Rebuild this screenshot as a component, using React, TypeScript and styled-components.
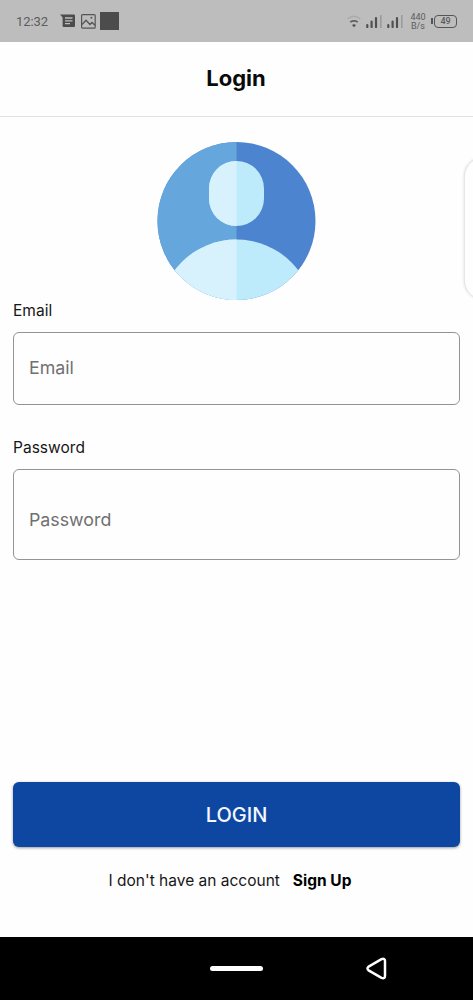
import React from "react";
import styled, { createGlobalStyle } from "styled-components";

const GlobalStyle = createGlobalStyle`
  * { box-sizing: border-box; }
  body { margin: 0; background: #fefefe; font-family: Inter, Roboto, sans-serif; }
`;

const Screen = styled.div`
  position: relative;
  display: flex;
  flex-direction: column;
  width: 473px;
  height: 1000px;
  overflow: hidden;
  background: #fefefe;
`;

const StatusBar = styled.header`
  display: flex;
  align-items: center;
  justify-content: space-between;
  height: 42px;
  padding: 0 16px;
  background: #bdbdbd;
  color: #5c5c5c;
  font-family: Roboto, sans-serif;
`;

const StatusGroup = styled.div`
  display: flex;
  align-items: center;
`;

const Clock = styled.span`
  width: 44px;
  font-size: 13px;
  line-height: 16px;
  padding-top: 1px;
  letter-spacing: -0.1px;
`;

const NetworkSpeed = styled.span`
  display: flex;
  flex-direction: column;
  align-items: center;
  width: 16px;
  margin: 1px 5px 0 7px;
  font-size: 9px;
  line-height: 9px;
`;

const Battery = styled.span`
  display: flex;
  align-items: center;
  gap: 1px;
  &::before {
    content: "";
    width: 2px;
    height: 6px;
    background: #555;
  }
`;

const BatteryLevel = styled.span`
  width: 23px;
  height: 13px;
  border: 1px solid #555;
  border-radius: 4px;
  font-size: 9px;
  font-weight: 500;
  line-height: 11px;
  text-align: center;
`;

const AppBar = styled.div`
  display: flex;
  align-items: center;
  justify-content: center;
  height: 75px;
  padding: 0 1px 2px 0;
  border-bottom: 1px solid #e2e2e2;
`;

const Title = styled.h1`
  margin: 0;
  color: #0a0a0a;
  font-size: 22px;
  font-weight: 700;
  line-height: 28px;
`;

const Form = styled.main`
  display: flex;
  flex-direction: column;
  flex: 1;
  padding: 25px 13px 0;
`;

const Avatar = styled.svg`
  align-self: center;
  width: 159px;
  height: 158px;
  margin-bottom: 1px;
`;

const Label = styled.label<{ $gap: number }>`
  margin-top: ${(p) => p.$gap}px;
  color: #161616;
  font-size: 15.5px;
  line-height: 20px;
  letter-spacing: 0.03px;
`;

const Field = styled.div<{ $height: number; $top?: number; $bottom?: number }>`
  display: flex;
  align-items: center;
  height: ${(p) => p.$height}px;
  margin-top: 11px;
  padding: ${(p) => p.$top ?? 0}px 15px ${(p) => p.$bottom ?? 0}px;
  border: 1px solid #949494;
  border-radius: 6px;
  color: #707070;
  font-size: 17.8px;
  line-height: 24px;
`;

const SubmitButton = styled.button`
  height: 65px;
  margin: auto 0 0;
  padding: 0;
  border: 0;
  border-radius: 6px;
  background: #0e47a1;
  box-shadow: 0 1px 3px rgba(0, 0, 0, 0.4);
  color: #f4f8ff;
  font-family: inherit;
  font-size: 20px;
  font-weight: 500;
`;

const SignUpRow = styled.p`
  display: flex;
  justify-content: center;
  gap: 13px;
  margin: 23px 0 46px;
  padding-right: 13px;
  color: #161616;
  font-size: 15.5px;
  line-height: 21px;
`;

const SignUpLink = styled.strong`
  color: #000;
  font-weight: 700;
`;

const NavBar = styled.nav`
  display: flex;
  align-items: center;
  height: 63px;
  padding-left: 210px;
  background: #000;
`;

const HomePill = styled.span`
  width: 53px;
  height: 5px;
  margin-right: 102px;
  border-radius: 3px;
  background: #fff;
`;

const EdgePanel = styled.aside`
  position: absolute;
  top: 157px;
  right: -30px;
  width: 39px;
  height: 143px;
  border: 1px solid #e6e6e6;
  border-radius: 20px;
  background: #fefefe;
  box-shadow: 0 0 3px rgba(0, 0, 0, 0.14);
`;

const MessageIcon = () => (
  <svg width="16" height="14" viewBox="0 0 16 14">
    <path d="M0 .5H14Q15 .5 15 1.5V12Q15 13 14 13H3.6Q2.6 13 2.6 12V3.6Z" fill="#4c4c4c" />
    <path d="M5 4H12.5M5 6.8H12.5M5 9.6H10" stroke="#bdbdbd" strokeWidth="1.3" />
  </svg>
);

const PictureIcon = () => (
  <svg width="15" height="15" viewBox="0 0 15 15" fill="none" stroke="#555">
    <rect x=".6" y=".6" width="13.6" height="13.6" rx="1" strokeWidth="1.2" />
    <path d="M1 10.5L5 6.2L9 10.5L11 8.5L14 11.3" strokeWidth="1.3" />
    <circle cx="10.4" cy="3.8" r="1" fill="#555" stroke="none" />
  </svg>
);

const NotificationIcons = styled.span`
  display: flex;
  align-items: center;
  gap: 5px;
`;

const NotificationBlock = styled.span`
  width: 19px;
  height: 18px;
  margin-left: -1px;
  background: #4c4c4c;
`;

const SignalIcons = styled.span`
  display: flex;
  align-items: flex-end;
  gap: 5px;
`;

const WifiIcon = () => (
  <svg width="14" height="13" viewBox="0 0 14 13" fill="none">
    <path d="M.5 4Q7-1.5 13.5 4" stroke="#aaa" strokeWidth="1.4" />
    <path d="M3.2 7.2Q7 4.6 10.8 7.2" stroke="#606060" strokeWidth="1.6" />
    <path d="M5 10Q7 8.6 9 10L7 12.3Z" fill="#505050" />
  </svg>
);

const SignalIcon = () => (
  <svg width="16" height="13" viewBox="0 0 16 13">
    <path d="M1.3 10V12M5.6 6.5V12M10 3V12" stroke="#505050" strokeWidth="2.2" strokeLinecap="round" />
    <path d="M14.8 0V13" stroke="#999" strokeWidth="1.5" />
  </svg>
);

const ProfileAvatar = () => (
  <Avatar viewBox="0 0 159 158">
    <defs>
      <clipPath id="left"><path d="M0 0H79.5V158H0Z" /></clipPath>
      <clipPath id="disc"><circle cx="79.5" cy="79" r="79" /></clipPath>
    </defs>
    <circle cx="79.5" cy="79" r="79" fill="#4d84cf" />
    <circle cx="79.5" cy="79" r="79" fill="#65a7dc" clipPath="url(#left)" />
    <g clipPath="url(#disc)">
      <rect x="52" y="19" width="55" height="65" rx="27.5" fill="#bdebfc" />
      <circle cx="79.5" cy="175" r="77.5" fill="#bdebfc" />
      <g clipPath="url(#left)">
        <rect x="52" y="19" width="55" height="65" rx="27.5" fill="#d7f2fd" />
        <circle cx="79.5" cy="175" r="77.5" fill="#d7f2fd" />
      </g>
    </g>
  </Avatar>
);

const BackIcon = () => (
  <svg width="24" height="26" viewBox="0 0 24 26" fill="none">
    <path d="M3.6 10.6L16.5 3.2Q20 1.8 20 5.3V19.7Q20 23.2 16.5 21.8L3.6 14.4Q1.4 12.5 3.6 10.6Z" stroke="#fff" strokeWidth="2.5" />
  </svg>
);

export default function App() {
  return (
    <>
      <GlobalStyle />
      <Screen>
        <StatusBar>
          <StatusGroup>
            <Clock>12:32</Clock>
            <NotificationIcons>
              <MessageIcon />
              <PictureIcon />
              <NotificationBlock />
            </NotificationIcons>
          </StatusGroup>
          <StatusGroup>
            <SignalIcons>
              <WifiIcon />
              <SignalIcon />
              <SignalIcon />
            </SignalIcons>
            <NetworkSpeed>
              <span>440</span>
              <span>B/s</span>
            </NetworkSpeed>
            <Battery>
              <BatteryLevel>49</BatteryLevel>
            </Battery>
          </StatusGroup>
        </StatusBar>
        <AppBar>
          <Title>Login</Title>
        </AppBar>
        <Form>
          <ProfileAvatar />
          <Label $gap={0}>Email</Label>
          <Field $height={73} $bottom={2}>Email</Field>
          <Label $gap={33}>Password</Label>
          <Field $height={91} $top={11}>Password</Field>
          <SubmitButton type="button">LOGIN</SubmitButton>
          <SignUpRow>
            <span>I don't have an account</span>
            <SignUpLink>Sign Up</SignUpLink>
          </SignUpRow>
        </Form>
        <NavBar>
          <HomePill />
          <BackIcon />
        </NavBar>
        <EdgePanel />
      </Screen>
    </>
  );
}
